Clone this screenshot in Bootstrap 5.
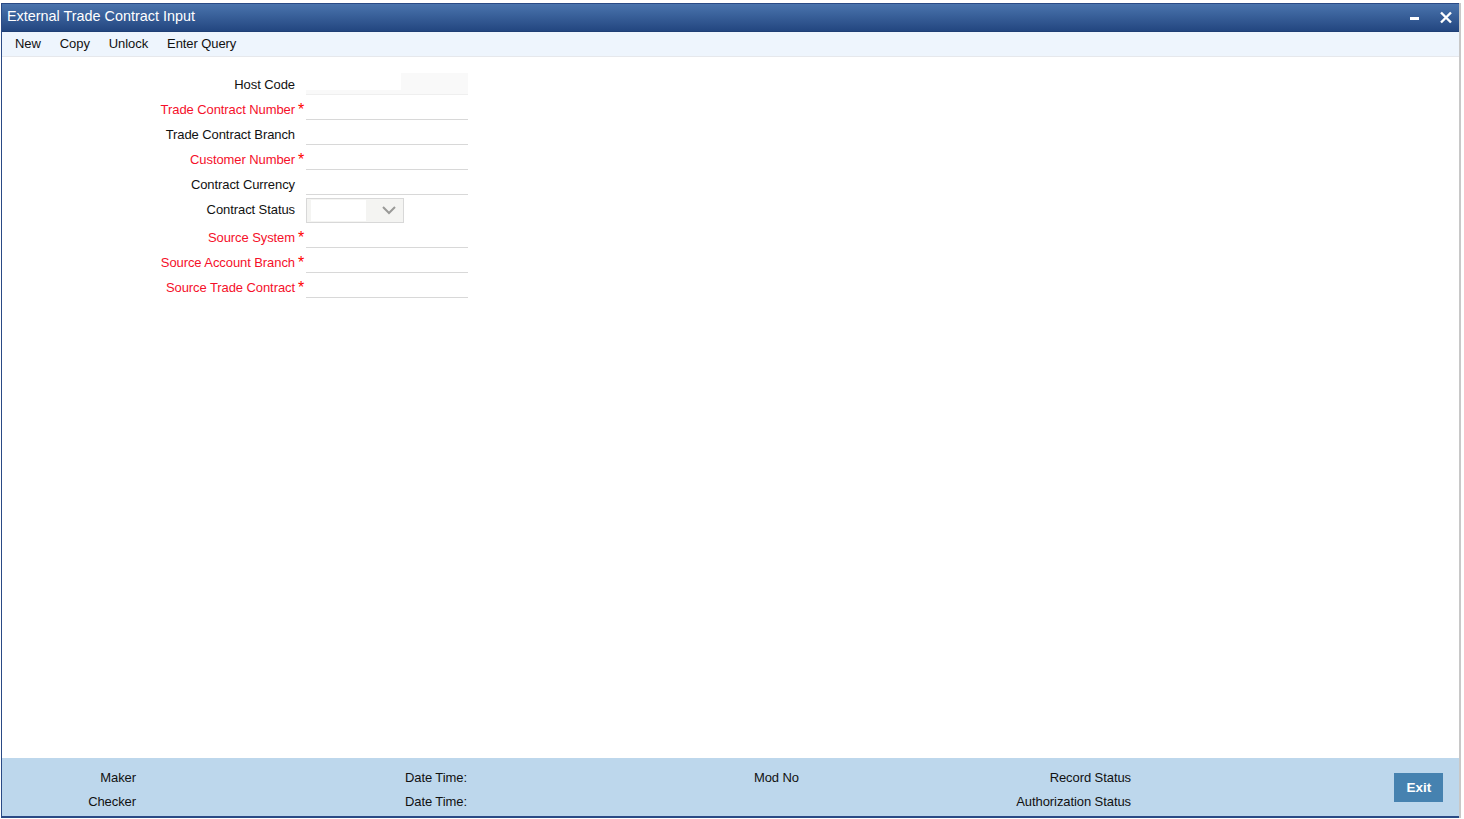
<!DOCTYPE html>
<html lang="en">
<head>
<meta charset="utf-8">
<title>External Trade Contract Input</title>
<link href="https://cdn.jsdelivr.net/npm/bootstrap@5.3.0/dist/css/bootstrap.min.css" rel="stylesheet">
<style>
html,body{height:819px;overflow:hidden;background:#fff}
body{font-family:"Liberation Sans",Arial,sans-serif;font-size:13px;letter-spacing:-.08px;color:#111;padding:3px 5px 1px 1px}
.win{height:815px;border:solid #2a4a85;border-width:1px 0 0 1px;box-shadow:2px 0 0 #c8c8c8}
.titlebar{height:28px;background:linear-gradient(#4a74ad,#234680);color:#fff;padding-left:5px;padding-bottom:1px;border-bottom:1px solid #1f3f75}
.titlebar h1{font-size:14.4px;font-weight:400;margin:0;line-height:1.2;letter-spacing:0}
.winbtn{width:31px;height:27px;padding:0;border:0;background:none}
.toolbar{height:25px;background:#eef5fd;border-bottom:1px solid #e6e8ec;padding-left:13px;padding-bottom:1px;gap:19px}
.toolbar a{color:#111;text-decoration:none}
.formarea{padding-top:13px}
.frow{height:25px}
.frow.sel{height:28px}
.flabel{width:293px;text-align:right;padding-top:4px}
.frow.sel .flabel{padding-top:2px}
.flabel.req{color:#f5102a}
.star{width:11px;height:25px;color:#f00;padding-left:3px;font-size:16px;line-height:24px;padding-top:3px;letter-spacing:0}
.fld{width:162px;height:25px;border:0;border-bottom:1px solid #d8d8d8;border-radius:0;background:#fff;padding:0 4px}
.hostfld{background:#f9f9f9;border-bottom:1px solid #efefef;margin-top:3px;height:22px;width:162px;padding:0;display:block}
.hostinner{display:block;width:95px;height:17px;background:#fff;border:0}
.selbox{width:98px;height:25px;margin-top:3px;background:#f4f4f2;border:1px solid #d8d8d8;padding-left:4px}
.selval{width:55px;height:21px;background:#fff}
.selbox svg{margin-right:2px}
.mainarea{flex:1 1 auto;min-height:0}
.footbar{height:60px;background:#bdd7ec;border-bottom:2px solid #2a4a85}
.fcell{text-align:right;line-height:24px}
.footgrid{display:grid;grid-template-columns:134px 331px 332px 332px;grid-auto-rows:24px;padding-top:8px}
.exitbtn{width:49px;height:29px;background:#4682b0;color:#fff;font-weight:700;font-size:13.5px;border:0;border-radius:0;padding:1px 0 0 1px;margin:15px 16px 0 0}
</style>
</head>
<body>
<div class="win d-flex flex-column">
  <div class="titlebar d-flex align-items-center justify-content-between flex-shrink-0">
    <h1>External Trade Contract Input</h1>
    <div class="d-flex">
      <button class="winbtn" type="button" aria-label="Minimize"><svg width="31" height="27" viewBox="0 0 31 27"><rect x="13" y="13" width="9" height="3" fill="#fff"/></svg></button>
      <button class="winbtn" type="button" aria-label="Close"><svg width="31" height="27" viewBox="0 0 31 27"><path d="M13 8.500 L23 18.500 M23 8.500 L13 18.500" stroke="#fff" stroke-width="2.4" fill="none"/></svg></button>
    </div>
  </div>
  <nav class="toolbar d-flex align-items-center flex-shrink-0">
    <a href="#">New</a><a href="#">Copy</a><a href="#">Unlock</a><a href="#">Enter Query</a>
  </nav>
  <main class="mainarea formarea">
    <div class="frow d-flex align-items-center">
      <label class="flabel">Host Code</label><span class="star"></span>
      <span class="hostfld"><span class="hostinner"></span></span>
    </div>
    <div class="frow d-flex align-items-center">
      <label class="flabel req">Trade Contract Number</label><span class="star">*</span><input class="fld" type="text" aria-label="Trade Contract Number">
    </div>
    <div class="frow d-flex align-items-center">
      <label class="flabel">Trade Contract Branch</label><span class="star"></span><input class="fld" type="text" aria-label="Trade Contract Branch">
    </div>
    <div class="frow d-flex align-items-center">
      <label class="flabel req">Customer Number</label><span class="star">*</span><input class="fld" type="text" aria-label="Customer Number">
    </div>
    <div class="frow d-flex align-items-center">
      <label class="flabel">Contract Currency</label><span class="star"></span><input class="fld" type="text" aria-label="Contract Currency">
    </div>
    <div class="frow sel d-flex align-items-center">
      <label class="flabel">Contract Status</label><span class="star"></span>
      <div class="selbox d-flex align-items-center justify-content-between">
        <span class="selval"></span>
        <svg width="24" height="21" viewBox="0 0 24 21"><path d="M6 7 L12 13 L18 7" stroke="#9a9a98" stroke-width="2" fill="none"/></svg>
      </div>
    </div>
    <div class="frow d-flex align-items-center">
      <label class="flabel req">Source System</label><span class="star">*</span><input class="fld" type="text" aria-label="Source System">
    </div>
    <div class="frow d-flex align-items-center">
      <label class="flabel req">Source Account Branch</label><span class="star">*</span><input class="fld" type="text" aria-label="Source Account Branch">
    </div>
    <div class="frow d-flex align-items-center">
      <label class="flabel req">Source Trade Contract</label><span class="star">*</span><input class="fld" type="text" aria-label="Source Trade Contract">
    </div>
  </main>
  <footer class="footbar d-flex justify-content-between flex-shrink-0">
    <div class="footgrid">
      <div class="fcell">Maker</div><div class="fcell">Date Time:</div><div class="fcell">Mod No</div><div class="fcell">Record Status</div>
      <div class="fcell">Checker</div><div class="fcell">Date Time:</div><div class="fcell"></div><div class="fcell">Authorization Status</div>
    </div>
    <button class="exitbtn btn" type="button">Exit</button>
  </footer>
</div>
<script src="https://cdn.jsdelivr.net/npm/bootstrap@5.3.0/dist/js/bootstrap.bundle.min.js"></script>
</body>
</html>
